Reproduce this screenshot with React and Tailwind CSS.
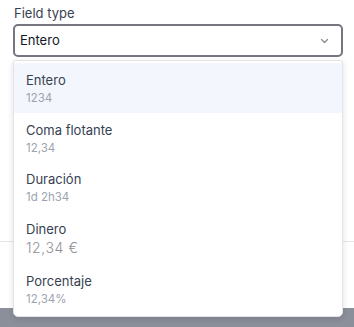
export default function App() {
  const items = [
    { t: "Entero", s: "1234", active: true, h: "h-[50px]" },
    { t: "Coma flotante", s: "12,34", h: "h-[49px]" },
    { t: "Duración", s: "1d 2h34", h: "h-[50px]" },
    { t: "Dinero", s: "12,34 €", big: true, h: "h-[52px]" },
    { t: "Porcentaje", s: "12,34%", h: "h-[50px]" },
  ];
  return (
    <div className="relative w-[354px] h-[327px] bg-white overflow-hidden" style={{ fontFamily: "Inter, 'Noto Sans', sans-serif" }}>
      <div className="h-[308px] flex flex-col">
        <div className="px-[14px] pt-[4px]">
          <div className="text-[13px] leading-[18px] text-[#374151]">Field type</div>
          <div className="mt-[2px] h-[33px] w-[330px] -ml-[1px] rounded-[5px] border-2 border-[#77757f] flex items-center justify-between pl-[5px] pr-[12px]">
            <span className="text-[13px] text-[#111827]">Entero</span>
            <svg width="9" height="6" viewBox="0 0 9 6" fill="none">
              <path d="M1.5 1.5 L4.5 4.5 L7.5 1.5" stroke="#8a8a94" strokeWidth="1.3" strokeLinecap="round" strokeLinejoin="round" />
            </svg>
          </div>
        </div>
        <div className="mt-[184px] h-px bg-[#e5e7eb]" />
      </div>
      <div className="h-[19px] bg-[#8b8f9a]" />
      <div className="absolute left-[13px] top-[60px] w-[330px] h-[257px] bg-white border border-[#e3e4e8] rounded-b-[5px] rounded-t-[3px] shadow-[0_2px_6px_rgba(0,0,0,0.12)] py-[2px]">
        {items.map((it) => (
          <div key={it.t} className={`px-[12px] pt-[8px] ${it.h} ${it.active ? "bg-[#f3f6fd]" : ""}`}>
            <div className="text-[13px] leading-[18px] text-[#374151]">{it.t}</div>
            <div className={it.big ? "mt-[1px] text-[14px] leading-[18px] font-light text-[#8f9198] tracking-[0.6px]" : "mt-[1px] text-[11.5px] leading-[16px] text-[#9ca3af]"}>{it.s}</div>
          </div>
        ))}
      </div>
    </div>
  );
}
